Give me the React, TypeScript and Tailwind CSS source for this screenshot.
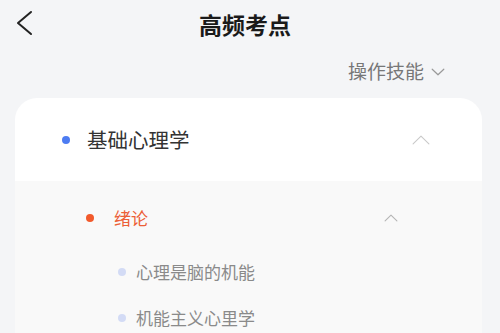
const cjk = { fontFamily: '"Noto Sans CJK SC", "Noto Sans", sans-serif' }

const topics = ['心理是脑的机能', '机能主义心里学']

function Chevron({ w, h, dir, color, sw = 1.2 }: { w: number; h: number; dir: 'up' | 'down' | 'left'; color: string; sw?: number }) {
  const p = sw
  let points = ''
  if (dir === 'up') points = `${p},${h - p} ${w / 2},${p} ${w - p},${h - p}`
  if (dir === 'down') points = `${p},${p} ${w / 2},${h - p} ${w - p},${p}`
  if (dir === 'left') points = `${w - p},${p} ${p},${h / 2} ${w - p},${h - p}`
  return (
    <svg width={w} height={h} viewBox={`0 0 ${w} ${h}`} fill="none">
      <polyline points={points} stroke={color} strokeWidth={sw} strokeLinecap="round" strokeLinejoin="round" />
    </svg>
  )
}

export default function App() {
  return (
    <div className="w-[500px] h-[333px] overflow-hidden bg-[#f4f5f7]" style={cjk}>
      {/* Nav bar */}
      <div className="relative flex h-[48px] items-center justify-center pr-[10px]">
        <div className="absolute left-[16px] top-[10px]">
          <Chevron w={17} h={26} dir="left" color="#222" sw={2} />
        </div>
        <span className="text-[23px] font-bold text-[#1a1a1a]">高频考点</span>
      </div>

      {/* Filter */}
      <div className="flex h-[46px] items-center justify-end pr-[55px]">
        <span className="text-[19px] text-[#777]">操作技能</span>
        <span className="ml-[7px] mt-[2px]">
          <Chevron w={14} h={8} dir="down" color="#999" sw={1.2} />
        </span>
      </div>

      {/* Card */}
      <div className="mx-[15px] mt-[4px] w-[467px] overflow-hidden rounded-t-[22px] bg-white">
        <div className="flex h-[83px] items-center pl-[47px] pr-[52px]">
          <span className="h-[8px] w-[8px] rounded-full bg-[#4d7cf2]" />
          <span className="ml-[17px] flex-1 text-[20.5px] text-[#333]">基础心理学</span>
          <Chevron w={18} h={10} dir="up" color="#c9c9c9" sw={1.1} />
        </div>

        <div className="bg-[#f9f9f9] pb-[20px]">
          <div className="flex h-[74px] items-center pl-[71px] pr-[84px]">
            <span className="h-[8px] w-[8px] rounded-full bg-[#f25a2c]" />
            <span className="ml-[20px] flex-1 text-[17px] text-[#ec5f37]">绪论</span>
            <Chevron w={14} h={8} dir="up" color="#b5b5b5" sw={1.1} />
          </div>
          <div className="flex flex-col gap-[26px] pt-[7px] pl-[103px]">
            {topics.map((t) => (
              <div key={t} className="flex h-[20px] items-center">
                <span className="h-[8px] w-[8px] rounded-full bg-[#d3dbf5]" />
                <span className="ml-[10px] text-[17px] text-[#8a8a8a]">{t}</span>
              </div>
            ))}
          </div>
        </div>
      </div>
    </div>
  )
}
